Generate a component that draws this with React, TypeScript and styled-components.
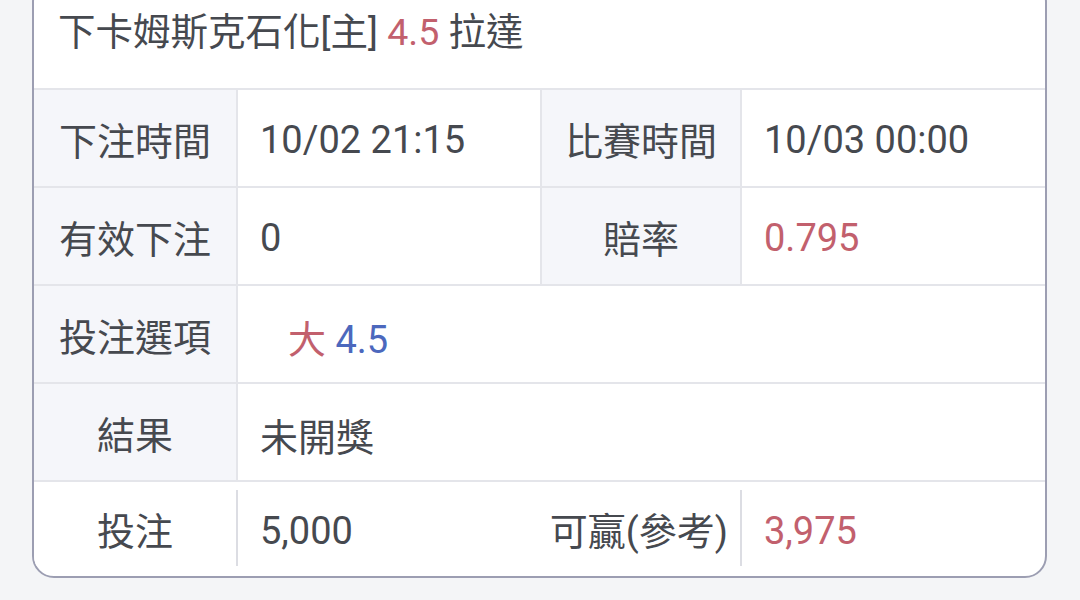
import React from "react";
import styled, { createGlobalStyle } from "styled-components";

const GlobalStyle = createGlobalStyle`
  html, body {
    margin: 0;
    padding: 0;
    background: #f4f5f7;
    font-family: Roboto, "Noto Sans CJK TC", "Noto Sans", sans-serif;
    color: #46494f;
  }
  * {
    box-sizing: border-box;
  }
`;

const Page = styled.div`
  width: 1080px;
  height: 600px;
  overflow: hidden;
`;

const Card = styled.div`
  margin: -20px 0 0 32px;
  width: 1015px;
  background: #fff;
  border: 2px solid #9c9eb2;
  border-radius: 22px;
  overflow: hidden;
`;

const Title = styled.div`
  height: 106px;
  line-height: 100px;
  padding-left: 24px;
  font-size: 37.5px;
  white-space: nowrap;
`;

const Row = styled.div<{ $plain?: boolean }>`
  display: grid;
  grid-template-columns: 204px 304px 200px 1fr;
  height: ${(p) => (p.$plain ? "96px" : "98px")};
  border-top: 2px solid #e4e5ea;
`;

const Label = styled.div<{ $plain?: boolean; $align?: "center" | "right" }>`
  display: flex;
  align-items: center;
  justify-content: ${(p) => (p.$align === "right" ? "flex-end" : "center")};
  padding-right: ${(p) => (p.$align === "right" ? "12px" : "0")};
  font-size: 38px;
  white-space: nowrap;
  background: ${(p) => (p.$plain ? "#fff" : "#f5f6fa")};
  border-right: 2px solid ${(p) => (p.$plain ? "#dcdde3" : "#e4e5ea")};
  margin: ${(p) => (p.$plain ? "8px 0 10px" : "0")};
`;

const Value = styled.div<{ $span?: boolean; $noBorder?: boolean }>`
  display: flex;
  align-items: center;
  padding: 4px 0 0 22px;
  font-size: 38px;
  white-space: nowrap;
  grid-column: ${(p) => (p.$span ? "2 / 5" : "auto")};
  border-right: ${(p) => (p.$noBorder ? "none" : "2px solid #e4e5ea")};
`;

const Red = styled.span`
  color: #c2606d;
`;

const Blue = styled.span`
  color: #4c68bd;
`;

const Pick = styled.span`
  margin-left: 28px;
`;

export default function App() {
  return (
    <Page>
      <GlobalStyle />
      <Card>
        <Title>
          下卡姆斯克石化[主] <Red>4.5</Red> 拉達
        </Title>
        <Row>
          <Label>下注時間</Label>
          <Value>10/02 21:15</Value>
          <Label>比賽時間</Label>
          <Value $noBorder>10/03 00:00</Value>
        </Row>
        <Row>
          <Label>有效下注</Label>
          <Value>0</Value>
          <Label>賠率</Label>
          <Value $noBorder>
            <Red>0.795</Red>
          </Value>
        </Row>
        <Row>
          <Label>投注選項</Label>
          <Value $span $noBorder>
            <Pick>
              <Red>大</Red> <Blue>4.5</Blue>
            </Pick>
          </Value>
        </Row>
        <Row>
          <Label>結果</Label>
          <Value $span $noBorder>
            未開獎
          </Value>
        </Row>
        <Row $plain>
          <Label $plain>投注</Label>
          <Value $noBorder>5,000</Value>
          <Label $plain $align="right">
            可贏(參考)
          </Label>
          <Value $noBorder>
            <Red>3,975</Red>
          </Value>
        </Row>
      </Card>
    </Page>
  );
}
